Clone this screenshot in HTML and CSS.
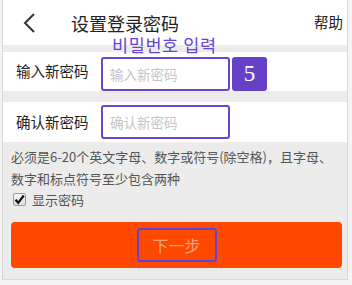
FILE: index.html
```html
<!DOCTYPE html>
<html lang="zh-CN">
<head>
    <meta charset="UTF-8">
    <meta name="viewport" content="width=device-width, initial-scale=1.0">
    <title>设置登录密码</title>
    <link rel="stylesheet" href="styles.css">
</head>
<body>
<div class="app">
    <header class="topbar">
        <svg class="back" width="14" height="22" viewBox="0 0 14 22">
            <polyline points="11,2 2,11 11,20" fill="none" stroke="#333" stroke-width="2"/>
        </svg>
        <h1 class="title">设置登录密码</h1>
        <a class="help">帮助</a>
    </header>

    <span class="note">비밀번호 입력</span>

    <div class="row row-first">
        <label class="label">输入新密码</label>
        <input class="field" type="password" placeholder="输入新密码">
        <span class="badge">5</span>
    </div>

    <div class="row">
        <label class="label">确认新密码</label>
        <input class="field" type="password" placeholder="确认新密码">
    </div>

    <div class="hint">
        <p>必须是6-20个英文字母、数字或符号(除空格)，且字母、<br>数字和标点符号至少包含两种</p>
        <div class="show-pwd">
            <span class="check">
                <svg width="11" height="11" viewBox="0 0 11 11">
                    <path d="M1.5 5.8 L4.2 8.8 L9.8 1.5" fill="none" stroke="#111" stroke-width="2.2"/>
                </svg>
            </span>
            <span>显示密码</span>
        </div>
    </div>

    <div class="next">
        <span class="next-label">下一步</span>
    </div>
</div>
</body>
</html>
```

FILE: styles.css
```css
:root {
    --page-bg: #f4f4f4;
    --app-bg: #ececec;
    --frame-color: #d8d8d8;
    --accent: #6a43cf;
    --orange: #ff4800;
    --text-color: #222222;
}

*, *::before, *::after {
    box-sizing: border-box;
}

body {
    margin: 0;
    padding: 0;
    background-color: var(--page-bg);
    font-family: 'Noto Sans CJK SC', 'Noto Sans', sans-serif;
    color: var(--text-color);
}

.app {
    position: relative;
    width: 346px;
    height: 280px;
    margin-left: 2px;
    background-color: var(--app-bg);
    border: 1px solid var(--frame-color);
    border-top: none;
}

.topbar {
    display: flex;
    align-items: center;
    height: 45px;
    padding: 0 4px 0 20px;
    background-color: #ffffff;
}

.back {
    display: block;
}

.title {
    margin: 0 0 0 34px;
    font-size: 18px;
    font-weight: normal;
    line-height: 1;
}

.help {
    margin-left: auto;
    font-size: 14.5px;
    line-height: 1;
}

/* anotacao coreana sobre o cabecalho */
.note {
    position: absolute;
    left: 109px;
    top: 36px;
    font-family: 'Noto Sans CJK KR', sans-serif;
    font-size: 17.5px;
    line-height: 17px;
    color: #6745d6;
    letter-spacing: 0.6px;
}

.row {
    display: flex;
    align-items: center;
    height: 40px;
    margin-top: 11px;
    padding-left: 13px;
    background-color: #ffffff;
}

.row-first {
    margin-top: 7px;
    height: 39px;
    align-items: flex-start;
    padding-top: 5px;
}

.row-first .label {
    align-self: center;
    margin-top: -5px;
}

.label {
    width: 85px;
    font-size: 14.5px;
    line-height: 1;
}

.field {
    width: 129px;
    height: 34px;
    margin: 0;
    padding: 0 0 0 7px;
    border: 2px solid var(--accent);
    border-radius: 3px;
    background: #ffffff;
    font-family: 'Noto Sans CJK SC', sans-serif;
    font-size: 13.5px;
    outline: none;
}

.field::placeholder {
    color: #c4c4c4;
}

.badge {
    display: flex;
    align-items: center;
    justify-content: center;
    width: 35px;
    height: 34px;
    margin-left: 2px;
    background-color: #6641c8;
    border-radius: 3px;
    color: #ffffff;
    font-family: 'Liberation Serif', 'DejaVu Serif', serif;
    font-size: 23px;
}

.hint {
    padding: 4px 8px 0;
    font-size: 13px;
    color: #555555;
}

.hint p {
    margin: 0;
    line-height: 22px;
}

.show-pwd {
    display: flex;
    align-items: center;
    gap: 6px;
    margin-top: -1px;
    padding-left: 2px;
    height: 20px;
}

.check {
    display: flex;
    align-items: center;
    justify-content: center;
    width: 13px;
    height: 13px;
    border: 1px solid #9a9a9a;
    border-radius: 2px;
    background: linear-gradient(#fafafa, #dcdcdc);
}

.next {
    display: flex;
    align-items: center;
    justify-content: center;
    height: 46px;
    margin: 13px 5px 0 8px;
    background-color: var(--orange);
    border-radius: 4px;
}

.next-label {
    display: flex;
    align-items: center;
    justify-content: center;
    width: 80px;
    height: 34px;
    border: 2px solid #5a45d6;
    border-radius: 3px;
    color: #f8a07c;
    font-size: 16px;
}
```
